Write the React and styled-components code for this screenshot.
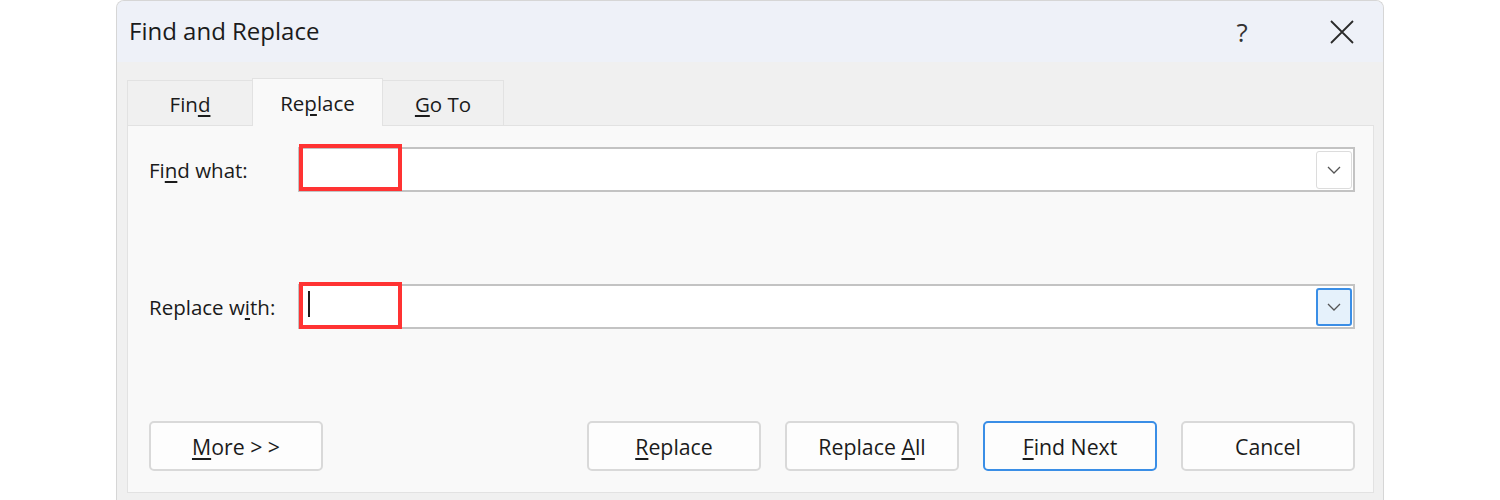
import React from "react";
import styled, { createGlobalStyle } from "styled-components";

const Global = createGlobalStyle`
  html, body { margin: 0; padding: 0; background: #ffffff; }
  body { font-family: "Open Sans", "Noto Sans", sans-serif; color: #1b1b1b; }
  * { box-sizing: border-box; }
`;

const Page = styled.div`
  width: 1500px;
  height: 500px;
  overflow: hidden;
  display: flex;
  justify-content: center;
`;

const Dialog = styled.div`
  width: 1268px;
  height: 520px;
  background: #f0f0f0;
  border: 1px solid #d6d6d6;
  border-bottom: none;
  border-radius: 8px 8px 0 0;
  display: flex;
  flex-direction: column;
  overflow: hidden;
`;

const TitleBar = styled.div`
  height: 61px;
  flex: none;
  background: #eef1f8;
  display: flex;
  align-items: center;
  padding-left: 12px;
`;

const Title = styled.div`
  font-size: 24px;
  color: #1b1b1b;
  flex: 1;
  margin-top: -2px;
`;

const TitleButton = styled.div`
  width: ${(p) => p.$w}px;
  height: 61px;
  display: flex;
  align-items: center;
  justify-content: center;
  font-size: 26px;
  color: #333;
`;

const Body = styled.div`
  padding: 16px 9px 0 10px;
  display: flex;
  flex-direction: column;
`;

const TabRow = styled.div`
  display: flex;
  align-items: flex-end;
  height: 47px;
`;

const Tab = styled.div`
  width: ${(p) => p.$w}px;
  height: ${(p) => (p.$active ? 48 : 45)}px;
  background: ${(p) => (p.$active ? "#f9f9f9" : "#f0f0f0")};
  border: 1px solid #e2e2e2;
  border-bottom: none;
  margin-left: ${(p) => (p.$first ? 0 : -1)}px;
  margin-bottom: ${(p) => (p.$active ? -1 : 0)}px;
  position: relative;
  z-index: ${(p) => (p.$active ? 2 : 1)};
  display: flex;
  justify-content: center;
  align-items: center;
  padding-top: ${(p) => (p.$active ? 0 : 2)}px;
  font-size: 20.5px;
  color: #1b1b1b;
`;

const Panel = styled.div`
  height: 368px;
  background: #f9f9f9;
  border: 1px solid #e2e2e2;
  padding: 21px 18px 21px 21px;
  display: flex;
  flex-direction: column;
`;

const FieldRow = styled.div`
  display: grid;
  grid-template-columns: 149px 1fr;
  align-items: center;
  margin-bottom: ${(p) => p.$mb}px;
`;

const Label = styled.div`
  font-size: 20.5px;
  color: #1b1b1b;
  padding-top: 0px;
`;

const Combo = styled.div`
  position: relative;
  height: 45px;
  background: #ffffff;
  border: 2px solid #c3c3c3;
  display: flex;
  align-items: center;
  justify-content: flex-end;
  padding-right: 1px;
`;

const DropButton = styled.div`
  width: 36px;
  height: 38px;
  border-radius: 3px;
  border: ${(p) => (p.$focus ? "2px solid #3a8ee6" : "1px solid #dcdcdc")};
  background: ${(p) => (p.$focus ? "#e5f1fb" : "#ffffff")};
  display: flex;
  align-items: center;
  justify-content: center;
`;

const Highlight = styled.div`
  position: absolute;
  left: -1px;
  top: ${(p) => p.$top}px;
  width: 103px;
  height: 47px;
  border: 4px solid #ff3333;
  pointer-events: none;
`;

const Caret = styled.div`
  position: absolute;
  left: 8px;
  top: 5px;
  width: 2px;
  height: 26px;
  background: #1b1b1b;
`;

const ButtonRow = styled.div`
  margin-top: auto;
  display: flex;
  align-items: center;
  gap: 24px;
`;

const Spacer = styled.div`
  flex: 1;
`;

const Button = styled.div`
  width: 174px;
  height: 50px;
  background: #fdfdfd;
  border: ${(p) => (p.$default ? "2px solid #3a8ee6" : "2px solid #d9d9d9")};
  border-radius: 5px;
  display: flex;
  align-items: center;
  justify-content: center;
  font-size: 21.3px;
  color: #1b1b1b;
`;

const U = styled.span`
  text-decoration: underline;
  text-decoration-thickness: 1.5px;
  text-underline-offset: 3px;
`;

const Chevron = () => (
  <svg width="14" height="8" viewBox="0 0 14 8">
    <path d="M1 1 L7 7 L13 1" fill="none" stroke="#555" strokeWidth="1.3" />
  </svg>
);

const CloseIcon = () => (
  <svg width="24" height="24" viewBox="0 0 24 24">
    <path d="M1 1 L23 23 M23 1 L1 23" fill="none" stroke="#2a2a2a" strokeWidth="1.8" />
  </svg>
);

export default function App() {
  return (
    <>
      <Global />
      <Page>
        <Dialog>
          <TitleBar>
            <Title>Find and Replace</Title>
            <TitleButton $w={118}>?</TitleButton>
            <TitleButton $w={82}>
              <CloseIcon />
            </TitleButton>
          </TitleBar>
          <Body>
            <TabRow>
              <Tab $w={126} $first>
                <span>
                  Fin<U>d</U>
                </span>
              </Tab>
              <Tab $w={131} $active>
                <span>
                  Re<U>p</U>lace
                </span>
              </Tab>
              <Tab $w={122}>
                <span>
                  <U>G</U>o To
                </span>
              </Tab>
            </TabRow>
            <Panel>
              <FieldRow $mb={92}>
                <Label>
                  Fi<U>n</U>d what:
                </Label>
                <Combo>
                  <Highlight $top={-5} />
                  <DropButton>
                    <Chevron />
                  </DropButton>
                </Combo>
              </FieldRow>
              <FieldRow $mb={0}>
                <Label>
                  Replace w<U>i</U>th:
                </Label>
                <Combo>
                  <Highlight $top={-4} />
                  <Caret />
                  <DropButton $focus>
                    <Chevron />
                  </DropButton>
                </Combo>
              </FieldRow>
              <ButtonRow>
                <Button>
                  <span>
                    <U>M</U>ore &gt; &gt;
                  </span>
                </Button>
                <Spacer />
                <Button>
                  <span>
                    <U>R</U>eplace
                  </span>
                </Button>
                <Button>
                  <span>
                    Replace <U>A</U>ll
                  </span>
                </Button>
                <Button $default>
                  <span>
                    <U>F</U>ind Next
                  </span>
                </Button>
                <Button>
                  <span>Cancel</span>
                </Button>
              </ButtonRow>
            </Panel>
          </Body>
        </Dialog>
      </Page>
    </>
  );
}
